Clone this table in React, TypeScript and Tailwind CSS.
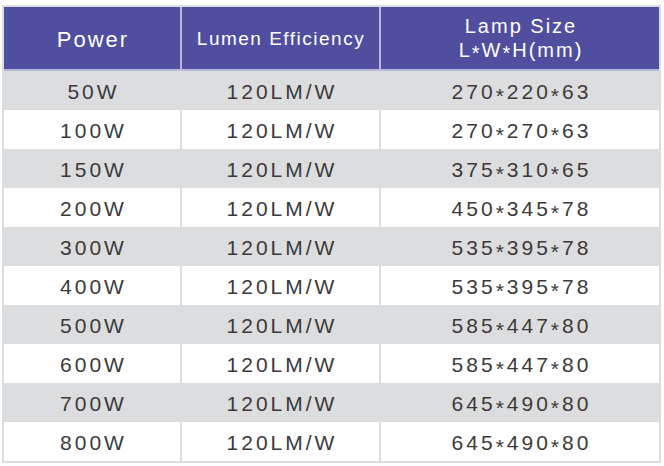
import React from "react";

const rows: [string, string, string][] = [
  ["50W", "120LM/W", "270*220*63"],
  ["100W", "120LM/W", "270*270*63"],
  ["150W", "120LM/W", "375*310*65"],
  ["200W", "120LM/W", "450*345*78"],
  ["300W", "120LM/W", "535*395*78"],
  ["400W", "120LM/W", "535*395*78"],
  ["500W", "120LM/W", "585*447*80"],
  ["600W", "120LM/W", "585*447*80"],
  ["700W", "120LM/W", "645*490*80"],
  ["800W", "120LM/W", "645*490*80"],
];

function Stars({ text }: { text: string }) {
  const parts = text.split("*");
  return (
    <>
      {parts.map((p, i) => (
        <React.Fragment key={i}>
          {p}
          {i < parts.length - 1 && <span className="relative top-[4px]">*</span>}
        </React.Fragment>
      ))}
    </>
  );
}

export default function App() {
  const font = { fontFamily: '"Liberation Sans", Arial, sans-serif' };
  return (
    <div className="w-[664px] h-[466px] bg-white pt-[5px] pl-[2px]" style={font}>
      <div className="w-[659px] border-2 border-[#dcdddf] bg-[#dcdddf]">
        <div className="grid grid-cols-[176px_197px_278px] gap-x-[2px] bg-[#b9b8dc] border-b-2 border-[#b9b8dc]">
          <div className="h-[62px] bg-[#4f4e9f] text-white flex items-center justify-center text-[22px] tracking-[2px] pl-[2px] pt-[3px]">
            Power
          </div>
          <div className="h-[62px] bg-[#4f4e9f] text-white flex items-center justify-center text-[19px] tracking-[1.5px] pl-[1px] pt-[3px]">
            Lumen Efficiency
          </div>
          <div className="h-[62px] bg-[#4f4e9f] text-white flex flex-col items-center justify-center text-[20px] leading-[24px] tracking-[2px] pl-[2px]">
            <div>Lamp Size</div>
            <div>
              L<span className="relative top-[3px]">*</span>W<span className="relative top-[3px]">*</span>H(mm)
            </div>
          </div>
        </div>
        {rows.map((r, i) => {
          const bg = i % 2 === 0 ? "bg-[#dcdddf]" : "bg-white";
          return (
            <div key={i} className="grid grid-cols-[176px_197px_278px] gap-x-[2px]">
              {r.map((c, j) => (
                <div
                  key={j}
                  className={`${bg} h-[39px] flex items-center justify-center text-[21px] tracking-[3px] pl-[3px] pt-[2px] text-[#3b3a3a]`}
                >
                  <Stars text={c} />
                </div>
              ))}
            </div>
          );
        })}
      </div>
    </div>
  );
}
